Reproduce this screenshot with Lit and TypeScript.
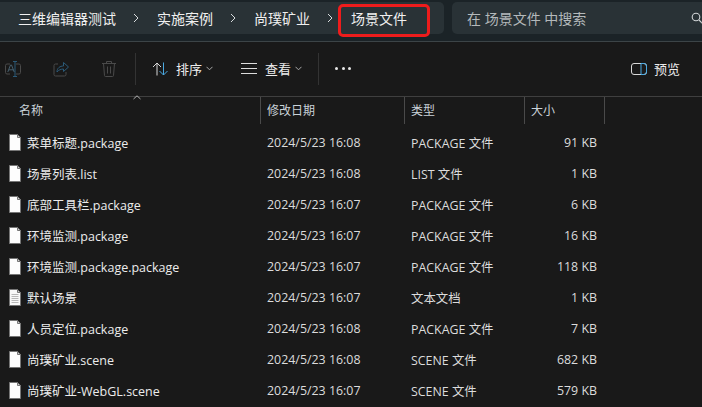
import { LitElement, html, css, svg } from "lit";
import { customElement } from "lit/decorators.js";

const files = [
  ["菜单标题.package", "2024/5/23 16:08", "PACKAGE 文件", "91 KB", 0],
  ["场景列表.list", "2024/5/23 16:08", "LIST 文件", "1 KB", 0],
  ["底部工具栏.package", "2024/5/23 16:07", "PACKAGE 文件", "6 KB", 0],
  ["环境监测.package", "2024/5/23 16:07", "PACKAGE 文件", "16 KB", 0],
  ["环境监测.package.package", "2024/5/23 16:07", "PACKAGE 文件", "118 KB", 0],
  ["默认场景", "2024/5/23 16:07", "文本文档", "1 KB", 1],
  ["人员定位.package", "2024/5/23 16:08", "PACKAGE 文件", "7 KB", 0],
  ["尚璞矿业.scene", "2024/5/23 16:08", "SCENE 文件", "682 KB", 0],
  ["尚璞矿业-WebGL.scene", "2024/5/23 16:07", "SCENE 文件", "579 KB", 0],
] as const;

const chev = html`<svg class="crumb-sep" width="6" height="10" viewBox="0 0 6 10"><path d="M1 1l4 4-4 4" fill="none" stroke="#d8dcde" stroke-width="1"/></svg>`;
const down = html`<svg class="down" width="7" height="5" viewBox="0 0 7 5"><path d="M.5 .8l3 3 3-3" fill="none" stroke="#a8a8a8" stroke-width="1"/></svg>`;

const fileIcon = (text: number) => html`<svg class="ficon" width="12" height="17" viewBox="0 0 12 17">
  <path d="M.5 .5h8l3 3v13H.5z" fill="#fdfdfd" stroke="#767676"/>
  <path d="M8.500 .5v3h3z" fill="#cfcfcf" stroke="#767676"/>
  ${text ? svg`<path d="M2.500 5.500h7M2.500 7.500h7M2.500 9.500h7M2.500 11.500h7M2.500 13.500h7" stroke="#9a9a9a"/><path d="M1 1h7v3.500h3V16H1z" fill="#f0f0f0" fill-opacity=".35"/>` : ""}
</svg>`;

@customElement("app-root")
export class AppRoot extends LitElement {
  static styles = css`
    :host { display: block; width: 702px; height: 407px; overflow: hidden; background: #191919; color: #e8e8e8;
      font-family: "Open Sans", "Noto Sans CJK SC", sans-serif; font-size: 13px; position: relative; }
    .top { height: 42px; box-sizing: border-box; background: #1b2327; border-bottom: 1px solid #3c4447; display: flex; gap: 8px; padding: 2px 0 0 0; }
    .crumbs { width: 444px; height: 32px; background: #293236; border-radius: 0 5px 5px 0; display: flex; align-items: center; padding-left: 18px; box-sizing: border-box; font-size: 14px; color: #f0f0f0; }
    .crumb-sep { margin: 0 18px 0 17px; flex: none; }
    .search { flex: 1; height: 32px; background: #293236; border-radius: 5px 0 0 5px; display: flex; align-items: center; padding-left: 15px; font-size: 14px; color: #b4b9bb; position: relative; }
    .search svg { position: absolute; left: 239px; top: 10px; }
    .red { position: absolute; left: 338px; top: 4px; width: 92px; height: 33px; box-sizing: border-box; border: 3px solid #ee1c1c; border-radius: 5px; pointer-events: none; }
    .toolbar { height: 55px; box-sizing: border-box; border-bottom: 1px solid #3f3f3f; display: flex; align-items: center; padding: 0 22px 1px 4px; }
    .tb-icons { display: flex; gap: 30px; flex: none; }
    .tb-icon { width: 18px; display: flex; justify-content: center; flex: none; }
    .tb-sep { width: 1px; height: 32px; background: #333; flex: none; }
    .s1 { margin: 0 16px 0 17px; }
    .s2 { margin: 0 16px 0 16px; }
    .tb-btn { display: flex; align-items: center; color: #ececec; }
    .tb-btn + .tb-btn { margin-left: 28px; }
    .tb-btn span { margin: 0 4px 0 8px; }
    .tb-btn.sortb span { margin-left: 7px; }
    .dots { display: flex; gap: 3.5px; }
    .dots i { width: 3px; height: 3px; border-radius: 50%; background: #e8e8e8; }
    .preview { margin-left: auto; display: flex; align-items: center; gap: 7px; color: #ececec; }
    .grid { display: grid; grid-template-columns: 261px 144px 120px 80px; }
    .head { height: 27px; position: relative; }
    .head > div { border-right: 1px solid #4a4a4a; padding-left: 6px; padding-bottom: 2px; box-sizing: border-box; display: flex; align-items: center; color: #c9d2d8; font-size: 12px; height: 27px; }
    .head > div:first-child { padding-left: 19px; }
    .sort { position: absolute; left: 133px; top: -2px; }
    .rows { padding-top: 3px; }
    .row { height: 31px; align-items: center; color: #dcdcdc; font-size: 12.4px; }
    .row > div { padding-left: 6px; }
    .name { display: flex; align-items: center; gap: 6px; padding-left: 9px !important; font-size: 12.5px; color: #ececec; }
    .ficon { flex: none; }
    .size { text-align: right; padding-right: 8px; padding-left: 0 !important; }
  `;

  render() {
    return html`
      <div class="top">
        <div class="crumbs">
          <span>三维编辑器测试</span>${chev}<span>实施案例</span>${chev}<span>尚璞矿业</span>${chev}<span>场景文件</span>
        </div>
        <div class="search">在 场景文件 中搜索
          <svg width="13" height="13" viewBox="0 0 13 13"><circle cx="5" cy="5" r="3.8" fill="none" stroke="#d0d4d6" stroke-width="1.1"/><path d="M8 8l4 4" stroke="#d0d4d6" stroke-width="1.2"/></svg>
        </div>
      </div>
      <div class="red"></div>
      <div class="toolbar">
        <div class="tb-icons">
          <div class="tb-icon"><svg width="16" height="16" viewBox="0 0 16 16" fill="none"><path d="M5 3H2a1.500 1.500 0 0 0-1.500 1.500v7A1.500 1.500 0 0 0 2 13h3M11 3h3a1.500 1.500 0 0 1 1.500 1.500v7A1.500 1.500 0 0 1 14 13h-3" stroke="#4a4a4a"/><path d="M10 .5v15M8 .5h4M8 15.500h4" stroke="#2b5a78"/><path d="M2.800 11l2.700-7h1l2.700 7M4 8.800h4.500" stroke="#46606f"/></svg></div>
          <div class="tb-icon"><svg width="16" height="16" viewBox="0 0 16 16" fill="none"><path d="M5 3H2.500A1.500 1.500 0 0 0 1 4.500v9A1.500 1.500 0 0 0 2.500 15h9a1.500 1.500 0 0 0 1.500-1.500V11" stroke="#4a4a4a"/><path d="M4 11c0-4 3-6 6.500-6V1.500L15.500 6l-5 4.500V8C8 8 5.500 9 4 11z" stroke="#2b5a78"/></svg></div>
          <div class="tb-icon"><svg width="14" height="16" viewBox="0 0 14 16" fill="none" stroke="#4a4a4a"><path d="M0 2.500h14M4.500 2.500V.5h5v2M1.500 2.500l1 12a1 1 0 0 0 1 1h7a1 1 0 0 0 1-1l1-12M5.500 5.500v7M8.500 5.500v7"/></svg></div>
        </div>
        <div class="tb-sep s1"></div>
        <div class="tb-btn sortb">
          <svg width="17" height="14" viewBox="0 0 17 14" fill="none"><path d="M5 13.500V1M1 5l4-4 4 4" stroke="#d8d8d8"/><path d="M11.500 .5V13M7.500 9l4 4 4-4" stroke="#4aa8e0"/></svg>
          <span>排序</span>${down}
        </div>
        <div class="tb-btn">
          <svg width="16" height="11" viewBox="0 0 16 11" fill="none" stroke="#dcdcdc"><path d="M0 .5h16M0 5.500h16M0 10.500h16"/></svg>
          <span>查看</span>${down}
        </div>
        <div class="tb-sep s2"></div>
        <div class="dots"><i></i><i></i><i></i></div>
        <div class="preview">
          <svg width="16" height="12" viewBox="0 0 16 12" fill="none"><rect x=".5" y=".5" width="15" height="11" rx="2.500" stroke="#d8d8d8"/><path d="M10 .5h3a2.500 2.500 0 0 1 2.500 2.500v6a2.500 2.500 0 0 1-2.500 2.500h-3z" stroke="#4aa8e0"/></svg>
          <span>预览</span>
        </div>
      </div>
      <div class="grid head">
        <div>名称</div><div>修改日期</div><div>类型</div><div>大小</div>
        <svg class="sort" width="8" height="5" viewBox="0 0 8 5"><path d="M.5 4L4 .8 7.500 4" fill="none" stroke="#b0b0b0"/></svg>
      </div>
      <div class="rows">
        ${files.map(
          (f) => html`<div class="grid row">
            <div class="name">${fileIcon(f[4])}<span>${f[0]}</span></div>
            <div>${f[1]}</div><div>${f[2]}</div><div class="size">${f[3]}</div>
          </div>`
        )}
      </div>
    `;
  }
}
